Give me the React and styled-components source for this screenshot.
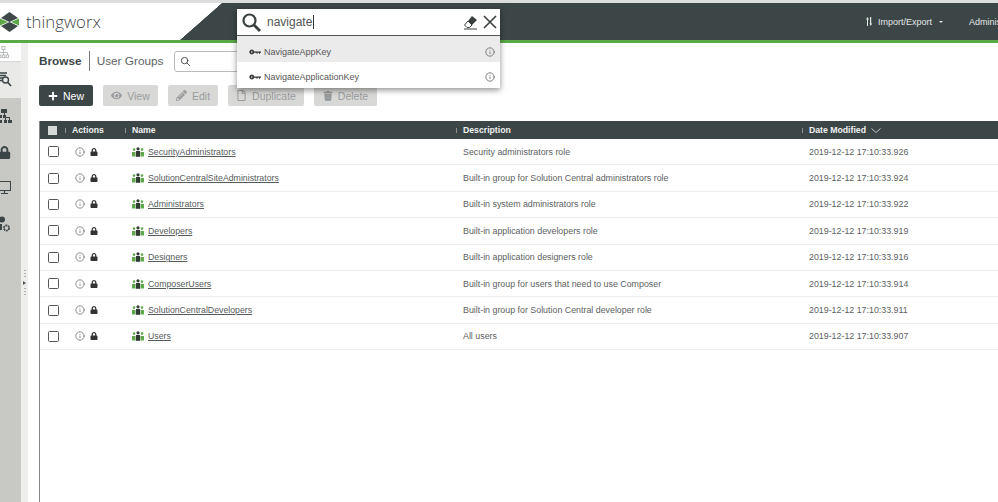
import styled, { createGlobalStyle } from "styled-components";
import { FaEye, FaLock, FaPencilAlt, FaPlus, FaTrash, FaRegFile } from "react-icons/fa";
import { FiInfo } from "react-icons/fi";
import { HiOutlineSearch } from "react-icons/hi";

const GlobalStyle = createGlobalStyle`
  html, body {
    margin: 0;
    padding: 0;
    background: #fff;
    overflow: hidden;
  }
  body {
    font-family: "Liberation Sans", Arial, sans-serif;
  }
  * {
    box-sizing: border-box;
  }
`;

const Page = styled.div`
  position: relative;
  width: 998px;
  height: 502px;
  display: flex;
  flex-direction: column;
  border-top: 3px solid #dcdedd;
  overflow: hidden;
`;

const Header = styled.header`
  display: flex;
  height: 40px;
  flex: none;
  border-bottom: 3px solid #5aa846;
`;

const LogoArea = styled.div`
  width: 180px;
  flex: none;
  display: flex;
  align-items: center;
  gap: 7px;
`;

const LogoText = styled.span`
  font-family: "Open Sans", sans-serif;
  font-weight: 300;
  font-size: 16.8px;
  color: #3f4647;
`;

const Wedge = styled.div`
  width: 42px;
  flex: none;
  background: linear-gradient(to bottom right, #fff 49.5%, #3d4647 50.5%);
`;

const DarkBar = styled.div`
  flex: 1;
  background: #3d4647;
  display: flex;
  align-items: center;
  color: #e4e6e6;
  font-size: 9px;
  padding-left: 644px;
  white-space: nowrap;
`;

const ImportExport = styled.span`
  display: flex;
  align-items: center;
  gap: 5px;
  width: 103px;
`;

const Caret = styled.span`
  width: 0;
  height: 0;
  margin-left: 2px;
  border-left: 2.5px solid transparent;
  border-right: 2.5px solid transparent;
  border-top: 2.5px solid #e4e6e6;
`;

const Body = styled.div`
  flex: 1;
  display: flex;
  min-height: 0;
`;

const Sidebar = styled.aside`
  width: 21px;
  flex: none;
  background: #c8c8c5;
  display: flex;
  flex-direction: column;
  overflow: hidden;
`;

const SideItem = styled.div`
  height: ${(p) => p.$h}px;
  display: flex;
  align-items: center;
  background: ${(p) => p.$bg || "transparent"};
  border-bottom: ${(p) => (p.$line ? "1px solid #d8d8d6" : "none")};
  color: #3d4647;
  svg {
    flex: none;
    margin-left: ${(p) => p.$shift || 0}px;
  }
`;

const Splitter = styled.div`
  width: 7px;
  flex: none;
  background: #eeeeec;
  display: flex;
  flex-direction: column;
  align-items: center;
  padding-top: 226px;
  gap: 2px;
`;

const SplitDots = styled.span`
  width: 2px;
  height: 10px;
  background-image: radial-gradient(circle, #b0b0ae 0.8px, transparent 1px);
  background-size: 2px 3px;
`;

const SplitArrow = styled.span`
  width: 0;
  height: 0;
  border-top: 2px solid transparent;
  border-bottom: 2px solid transparent;
  border-left: 3px solid #555;
`;

const Main = styled.main`
  flex: 1;
  min-width: 0;
  padding: 0 0 0 11px;
  display: flex;
  flex-direction: column;
`;

const TitleRow = styled.div`
  height: 36px;
  display: flex;
  align-items: center;
`;

const Title = styled.h1`
  margin: 0;
  font-size: 11.8px;
  font-weight: 700;
  color: #3d4647;
  padding-right: 7px;
  line-height: 20px;
`;

const Crumb = styled.span`
  border-left: 1px solid #777;
  padding-left: 7px;
  font-size: 11.8px;
  color: #5e6566;
  line-height: 20px;
  margin-right: 10px;
`;

const Filter = styled.div`
  width: 160px;
  height: 21px;
  border: 1px solid #bbb;
  border-radius: 3px;
  display: flex;
  align-items: center;
  padding-left: 5px;
  color: #444;
`;

const Toolbar = styled.div`
  display: flex;
  gap: 10px;
  height: 21px;
  margin-top: 6px;
`;

const ToolButton = styled.button`
  height: 21px;
  width: ${(p) => p.$w}px;
  border: 0;
  border-radius: 2px;
  padding: 0;
  display: flex;
  align-items: center;
  justify-content: center;
  gap: 5px;
  font-family: inherit;
  font-size: 10.5px;
  color: ${(p) => (p.$primary ? "#fff" : "#9a9d9d")};
  background: ${(p) => (p.$primary ? "#3d4647" : "#d8d8d6")};
`;

const Table = styled.div`
  margin-top: 15px;
  flex: 1;
  border-left: 1px solid #888;
`;

const gridCols = "25px 60px 331px 346px 1fr";

const HeadRow = styled.div`
  display: grid;
  grid-template-columns: ${gridCols};
  height: 18px;
  align-items: center;
  background: #3d4647;
  color: #f0f2f2;
  font-size: 8.7px;
  font-weight: 700;
`;

const HeadCell = styled.div`
  display: flex;
  align-items: center;
  gap: 7px;
  height: 100%;
  &::before {
    content: "";
    width: 1px;
    height: 5px;
    background: #8b9191;
    flex: none;
    margin-right: -1px;
  }
  svg {
    margin-left: -2px;
  }
`;

const HeadCheck = styled.div`
  padding-left: 8px;
`;

const HeadBox = styled.span`
  display: block;
  width: 9px;
  height: 9px;
  background: #d7d9d9;
`;

const Row = styled.div`
  display: grid;
  grid-template-columns: ${gridCols};
  height: 26.4px;
  align-items: center;
  border-bottom: 1px solid #ececec;
  color: #5c6162;
  font-size: 8.85px;
`;

const CheckCell = styled.div`
  padding-left: 8px;
`;

const CheckBox = styled.span`
  display: block;
  width: 11px;
  height: 11px;
  border: 1.3px solid #555;
  border-radius: 1.5px;
`;

const ActionCell = styled.div`
  display: flex;
  align-items: center;
  padding-left: 10px;
  gap: 5px;
  color: #333;
  svg:first-child {
    color: #777;
  }
`;

const NameCell = styled.div`
  display: flex;
  align-items: center;
  gap: 4px;
  padding-left: 7px;
`;

const NameLink = styled.a`
  color: #555a5b;
  font-size: 8.75px;
  text-decoration: underline;
`;

const TextCell = styled.div`
  padding-left: 7px;
`;

const SearchPop = styled.div`
  position: absolute;
  left: 237px;
  top: 6px;
  width: 263px;
  background: #fff;
  box-shadow: 0 2px 6px rgba(0, 0, 0, 0.45);
`;

const SearchInput = styled.div`
  height: 27px;
  display: flex;
  align-items: center;
  padding: 0 3px 0 5px;
  border-bottom: 1px solid #555;
  color: #333;
`;

const SearchText = styled.span`
  flex: 1;
  margin-left: 6px;
  font-size: 12px;
  color: #555;
  span {
    border-right: 1px solid #333;
    padding-right: 0.5px;
  }
`;

const SearchActions = styled.span`
  display: flex;
  align-items: center;
  gap: 5px;
`;

const Suggestion = styled.div`
  height: 26px;
  display: flex;
  align-items: center;
  padding: ${(p) => (p.$active ? 5 : 4)}px 5px 0 12px;
  gap: 3px;
  font-size: 9px;
  color: #555;
  background: ${(p) => (p.$active ? "#ebebeb" : "#fff")};
  span {
    flex: 1;
  }
  svg:last-child {
    color: #666;
  }
`;

const KeyIcon = () => (
  <svg width="12" height="6" viewBox="0 0 12 6">
    <circle cx="2.8" cy="3" r="2" fill="#333" stroke="#333" strokeWidth="1" />
    <circle cx="2.8" cy="3" r="0.8" fill="#fff" />
    <path d="M5 2.400h7v1.400h-1v1h-1v-1H8.500v1h-1v-1H5z" fill="#333" />
  </svg>
);

const GroupIcon = () => (
  <svg width="12" height="10" viewBox="0 0 12 10">
    <g fill="#5fa84b">
      <circle cx="2" cy="2.600" r="1.300" />
      <path d="M0 5h3.400v4.500H0z" />
      <circle cx="10" cy="2.600" r="1.300" />
      <path d="M8.600 5H12v4.500H8.600z" />
    </g>
    <circle cx="6" cy="1.800" r="1.600" fill="#2f3a33" />
    <path d="M3.900 4h4.200v5.800H3.900z" fill="#2f3a33" />
  </svg>
);

const LogoMark = () => (
  <svg width="19" height="22" viewBox="0 0 19 22">
    <path d="M9.500 1 18 7l-8.500 4L1 7z" fill="#3f4849" />
    <path d="M9.500 21 18 15l-8.500-4L1 15z" fill="#3f4849" />
    <path d="M0 7.500 8 11l-8 3.500z" fill="#5aa846" />
    <path d="M19 7.500 11 11l8 3.500z" fill="#5aa846" />
  </svg>
);

const TreeIcon = () => (
  <svg width="11" height="13" viewBox="0 0 11 13" fill="none" stroke="#b9bdbb">
    <rect x="4" y="0.500" width="3" height="3" />
    <path d="M5.500 3.500v3M1.500 9V6.500h8V9M5.500 6.500V9" />
    <rect x="0.500" y="9" width="2.500" height="2.500" />
    <rect x="4.200" y="9" width="2.500" height="2.500" />
    <rect x="8" y="9" width="2.500" height="2.500" />
  </svg>
);

const ListSearchIcon = () => (
  <svg width="12" height="18" viewBox="0 0 12 18" fill="none" stroke="#3d4647">
    <path d="M0 2h7M0 4.500h6M0 7h3M0 9.500h2" strokeWidth="1.600" />
    <circle cx="5.500" cy="9" r="3" strokeWidth="1.400" />
    <path d="m7.700 11.200 3.300 3.800" strokeWidth="1.600" />
  </svg>
);

const OrgIcon = () => (
  <svg width="15" height="16" viewBox="0 0 15 16" fill="#3d4647">
    <path d="M4 0h6v4H4zM0 6h5v3H0zM6 6h3v3H6zM1 11h4v3H1zM7 11h3v3H7zM11 11h4v3h-4z" />
    <path d="M7 4h1v2H7zM2 9h1v2H2zM8 9h1v2H8zM9 8h4v3h-1V9H9z" />
  </svg>
);

const MonitorIcon = () => (
  <svg width="13" height="14" viewBox="0 0 13 14" fill="none" stroke="#3d4647">
    <rect x="0.500" y="0.500" width="12" height="9" />
    <path d="M6.500 10v2M3 12.500h7" strokeWidth="1.200" />
  </svg>
);

const UserGearIcon = () => (
  <svg width="14" height="18" viewBox="0 0 14 18">
    <circle cx="4" cy="3.500" r="3" fill="#3d4647" />
    <path d="M0 8h4v6H0z" fill="#3d4647" />
    <circle cx="8.500" cy="12" r="2.600" fill="none" stroke="#3d4647" strokeWidth="1.800" strokeDasharray="2 0.7" />
  </svg>
);

const SortArrows = () => (
  <svg width="7" height="9" viewBox="0 0 7 9" fill="#e4e6e6">
    <path d="M1.500 0 3 2.500H2V9H1V2.500H0zM4 0h1.200v6.500h1L4.800 9 3.500 6.500H4z" />
  </svg>
);

const ChevronDown = () => (
  <svg width="10" height="5" viewBox="0 0 10 5" fill="none" stroke="#e4e6e6" strokeWidth="0.8">
    <path d="m0.500 0.500 4.500 4 4.500-4" />
  </svg>
);

const BigSearchIcon = () => (
  <svg width="19" height="19" viewBox="0 0 19 19" fill="none" stroke="#3a3f40" strokeWidth="2.200">
    <circle cx="7.500" cy="7.500" r="6" />
    <path d="m12 12 6 6" strokeWidth="2.800" />
  </svg>
);

const EraserIcon = () => (
  <svg width="15" height="15" viewBox="0 0 15 15">
    <path d="M9 1 14 5 9 10 5 6z" fill="#3a3f40" />
    <path d="M5 6 9 10 6.500 12.500H4L1.500 10z" fill="#fff" stroke="#3a3f40" />
    <path d="M1 14h13" stroke="#3a3f40" />
  </svg>
);

const CloseIcon = () => (
  <svg width="14" height="14" viewBox="0 0 14 14" fill="none" stroke="#3a3f40" strokeWidth="1.600">
    <path d="m1 1 12 12M13 1 1 13" />
  </svg>
);

const groups = [
  ["SecurityAdministrators", "Security administrators role", "2019-12-12 17:10:33.926"],
  ["SolutionCentralSiteAdministrators", "Built-in group for Solution Central administrators role", "2019-12-12 17:10:33.924"],
  ["Administrators", "Built-in system administrators role", "2019-12-12 17:10:33.922"],
  ["Developers", "Built-in application developers role", "2019-12-12 17:10:33.919"],
  ["Designers", "Built-in application designers role", "2019-12-12 17:10:33.916"],
  ["ComposerUsers", "Built-in group for users that need to use Composer", "2019-12-12 17:10:33.914"],
  ["SolutionCentralDevelopers", "Built-in group for Solution Central developer role", "2019-12-12 17:10:33.911"],
  ["Users", "All users", "2019-12-12 17:10:33.907"],
];

export default function App() {
  return (
    <Page>
      <GlobalStyle />
      <Header>
        <LogoArea>
          <LogoMark />
          <LogoText>thingworx</LogoText>
        </LogoArea>
        <Wedge />
        <DarkBar>
          <ImportExport>
            <SortArrows />
            Import/Export
            <Caret />
          </ImportExport>
          Administration
        </DarkBar>
      </Header>
      <Body>
        <Sidebar>
          <SideItem $h={19} $bg="#fff" $line $shift={-2}><TreeIcon /></SideItem>
          <SideItem $h={36} $bg="#e9e9e7"><ListSearchIcon /></SideItem>
          <SideItem $h={37} $shift={-3}><OrgIcon /></SideItem>
          <SideItem $h={35} $shift={-2}><FaLock size={13} /></SideItem>
          <SideItem $h={35} $shift={-2}><MonitorIcon /></SideItem>
          <SideItem $h={40} $shift={-2}><UserGearIcon /></SideItem>
        </Sidebar>
        <Splitter>
          <SplitDots />
          <SplitArrow />
          <SplitDots />
        </Splitter>
        <Main>
          <TitleRow>
            <Title>Browse</Title>
            <Crumb>User Groups</Crumb>
            <Filter><HiOutlineSearch size={11} /></Filter>
          </TitleRow>
          <Toolbar>
            <ToolButton $primary $w={54}><FaPlus size={10} />New</ToolButton>
            <ToolButton $w={55}><FaEye size={11} />View</ToolButton>
            <ToolButton $w={50}><FaPencilAlt size={11} />Edit</ToolButton>
            <ToolButton $w={76}><FaRegFile size={11} />Duplicate</ToolButton>
            <ToolButton $w={63}><FaTrash size={10} />Delete</ToolButton>
          </Toolbar>
          <Table>
            <HeadRow>
              <HeadCheck><HeadBox /></HeadCheck>
              <HeadCell>Actions</HeadCell>
              <HeadCell>Name</HeadCell>
              <HeadCell>Description</HeadCell>
              <HeadCell>Date Modified <ChevronDown /></HeadCell>
            </HeadRow>
            {groups.map(([name, desc, date]) => (
              <Row key={name}>
                <CheckCell><CheckBox /></CheckCell>
                <ActionCell><FiInfo size={10} /><FaLock size={8} /></ActionCell>
                <NameCell><GroupIcon /><NameLink>{name}</NameLink></NameCell>
                <TextCell>{desc}</TextCell>
                <TextCell>{date}</TextCell>
              </Row>
            ))}
          </Table>
        </Main>
      </Body>
      <SearchPop>
        <SearchInput>
          <BigSearchIcon />
          <SearchText><span>navigate</span></SearchText>
          <SearchActions><EraserIcon /><CloseIcon /></SearchActions>
        </SearchInput>
        <Suggestion $active><KeyIcon /><span>NavigateAppKey</span><FiInfo size={10} /></Suggestion>
        <Suggestion><KeyIcon /><span>NavigateApplicationKey</span><FiInfo size={10} /></Suggestion>
      </SearchPop>
    </Page>
  );
}
